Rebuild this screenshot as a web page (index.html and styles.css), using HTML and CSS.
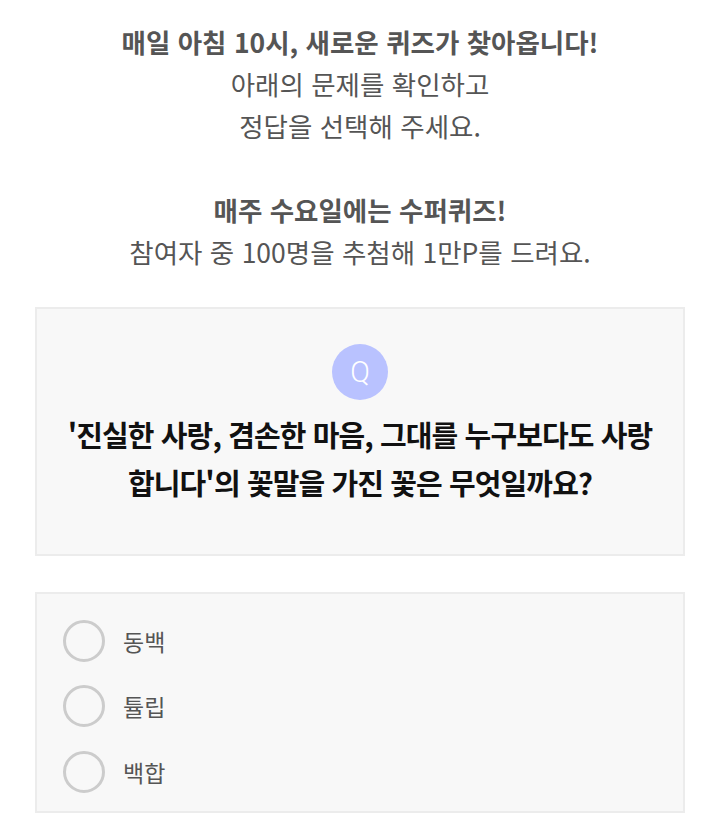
FILE: index.html
```html
<!DOCTYPE html>
<html lang="ko">
<head>
<meta charset="utf-8">
<link rel="stylesheet" href="styles.css">
</head>
<body>
<div class="page">
  <div class="intro">
    <p class="strong">매일 아침 10시, 새로운 퀴즈가 찾아옵니다!</p>
    <p>아래의 문제를 확인하고</p>
    <p>정답을 선택해 주세요.</p>
    <p class="blank">&nbsp;</p>
    <p class="strong">매주 수요일에는 수퍼퀴즈!</p>
    <p>참여자 중 100명을 추첨해 1만P를 드려요.</p>
  </div>
  <div class="question">
    <div class="q-badge">Q</div>
    <p class="q-text">'진실한 사랑, 겸손한 마음, 그대를 누구보다도 사랑합니다'의 꽃말을 가진 꽃은 무엇일까요?</p>
  </div>
  <ul class="options">
    <li class="option"><span class="radio"></span><span class="label">동백</span></li>
    <li class="option"><span class="radio"></span><span class="label">튤립</span></li>
    <li class="option"><span class="radio"></span><span class="label">백합</span></li>
  </ul>
</div>
</body>
</html>
```

FILE: styles.css
```css
* { box-sizing: border-box; }
body {
  margin: 0;
  background: #fff;
  font-family: "Noto Sans CJK KR", "Noto Sans", sans-serif;
}
.page {
  padding: 21px 35px 0 35px;
}
.intro {
  text-align: center;
  color: #555;
  font-size: 26.5px;
  line-height: 42px;
}
.intro p { margin: 0; }
.intro .strong { font-weight: 700; }
.question {
  margin-top: 34px;
  background: #f8f8f8;
  border: 2px solid #ececec;
  height: 249px;
  display: flex;
  flex-direction: column;
  align-items: center;
  padding: 35px 22px 0;
}
.q-badge {
  width: 56px;
  height: 56px;
  border-radius: 50%;
  background: #b9c2ff;
  color: #fff;
  font-family: Roboto, "Noto Sans", sans-serif;
  font-weight: 300;
  font-size: 29px;
  display: flex;
  align-items: center;
  justify-content: center;
}
.q-text {
  margin: 10px 0 0;
  text-align: center;
  color: #111;
  font-size: 29px;
  font-weight: 700;
  line-height: 48px;
  letter-spacing: -0.9px;
  word-break: break-all;
}
.options {
  list-style: none;
  margin: 36px 0 0;
  padding: 14px 26px 10px;
  background: #f8f8f8;
  border: 2px solid #ececec;
  height: 221px;
}
.option {
  display: flex;
  align-items: center;
  height: 65.5px;
}
.radio {
  width: 42px;
  height: 42px;
  border-radius: 50%;
  border: 3px solid #cccccc;
  flex: none;
}
.label {
  margin-left: 18px;
  font-size: 23px;
  color: #555;
}
```
